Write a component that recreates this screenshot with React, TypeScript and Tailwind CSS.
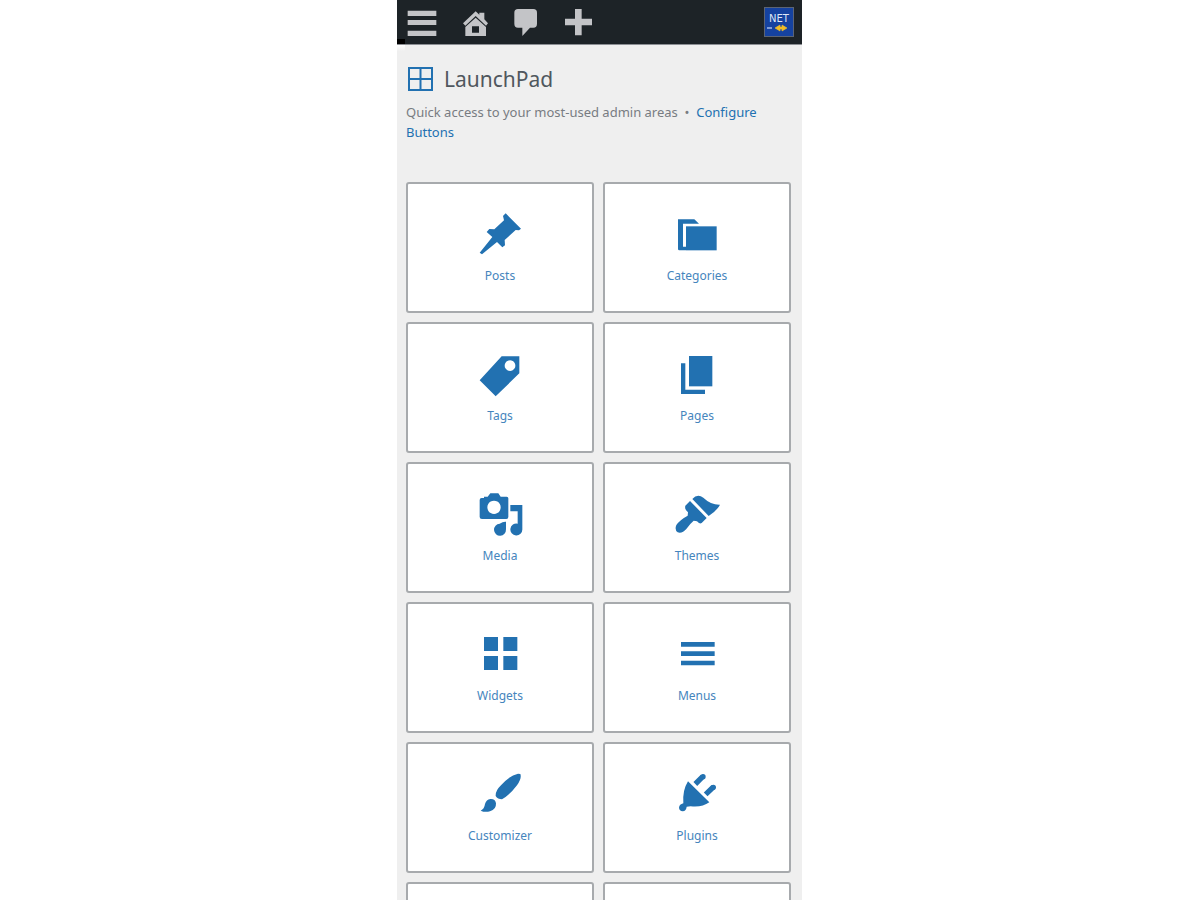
import type { ReactNode } from "react";

type Tile = { label: string; icon: ReactNode };

const tiles: Tile[] = [
  {
    label: "Posts",
    icon: <path d="M137 40 L183 86 L177 91 L167 90 L134 120 L135 136 L127 142 L111 126 L66 163 L59 158 L97 111 L80 96 L88 87 L103 88 L132 61 L129 48 Z" />,
  },
  {
    label: "Categories",
    icon: (
      <>
        <path d="M63 58 H112 L126 71 H78 V140 H87 V151 H67 Q63 151 63 147 Z" />
        <path d="M87 79 H179 V151 H87 Z" />
      </>
    ),
  },
  {
    label: "Tags",
    icon: <path fillRule="evenodd" d="M125 49 H178 V100 L107 169 L59 121 Z M150 61 a16 16 0 1 0 0.1 0 Z" />,
  },
  {
    label: "Pages",
    icon: (
      <>
        <path d="M96 48 H166 V139 H96 Z" />
        <path d="M72 70 H85 V149 H144 V162 H72 Z" />
      </>
    ),
  },
  {
    label: "Media",
    icon: (
      <>
        <path fillRule="evenodd" d="M83 50 L91 40 H115 L122 50 H140 Q145 50 145 55 V111 Q145 117 139 117 H66 Q59 117 59 111 V60 Q59 54 65 54 H72 V50 Z M102 62 a20 20 0 1 0 0.1 0 Z" />
        <path d="M151 75 H187 V148 A18 18 0 1 1 173 131 V94 H151 Z" />
        <path d="M138 125 V148 A18 18 0 1 1 119 131 Q129 124 138 125 Z" />
      </>
    ),
  },
  {
    label: "Themes",
    icon: (
      <>
        <path d="M106 57 Q121 40 139 53 Q162 75 189 74 Q181 91 155 108 Z" />
        <path d="M99 63 L149 114 L134 129 Q127 133 120 124 L110 122 Q100 130 88 147 Q76 161 62 157 Q52 149 58 135 Q68 120 92 107 L93 97 Q82 89 85 77 Z" />
      </>
    ),
  },
  {
    label: "Widgets",
    icon: <path d="M72 51 H114 V93 H72 Z M130 51 H172 V93 H130 Z M72 108 H114 V150 H72 Z M130 108 H172 V150 H130 Z" />,
  },
  {
    label: "Menus",
    icon: <path d="M72 66 H173 V80 H72 Z M72 94 H173 V108 H72 Z M72 122 H173 V136 H72 Z" />,
  },
  {
    label: "Customizer",
    icon: (
      <>
        <path d="M181 42 Q186 54 171 76 Q150 104 126 118 Q113 118 107 108 Q106 92 123 76 Q149 46 174 41 Z" />
        <path d="M91 117 Q106 116 108 130 Q109 149 90 154 Q75 158 62 152 Q73 147 75 132 Q79 119 91 117 Z" />
      </>
    ),
  },
  {
    label: "Plugins",
    icon: (
      <>
        <path d="M93 64 L157 127 Q135 143 101 139 L89 140 Q88 152 77 154 Q67 153 66 143 Q67 133 79 130 Q76 91 93 64 Z" />
        <path d="M115 72 L137 50 M146 103 L169 81" fill="none" stroke="currentColor" strokeWidth="16" />
        <circle cx="138" cy="50" r="8" />
        <circle cx="169" cy="82" r="8" />
      </>
    ),
  },
];

function AdminBar() {
  return (
    <header className="relative flex h-11 items-center justify-between bg-[#1d2327] pl-[9px] pr-2 text-[#c3c4c7]">
      <nav className="flex items-center gap-5">
        <button aria-label="Menu" className="block">
          <svg className="block h-8 w-8" viewBox="0 0 96 96" fill="currentColor">
            <path d="M5 14 H91 V30 H5 Z M5 42 H91 V57 H5 Z M5 74 H91 V90 H5 Z" />
          </svg>
        </button>
        <a href="#home" aria-label="Visit site" className="block">
          <svg className="block h-8 w-8" viewBox="204 18 96 96" fill="currentColor">
            <path d="M219 70 L257 34 L268 44 V38 H283 V58 L294 70 L288 77 L257 48 L226 77 Z" />
            <path fillRule="evenodd" d="M257 53 L288 81 V108 H226 V81 Z M246 79 V98 H267 V79 Z" />
          </svg>
        </a>
        <a href="#comments" aria-label="Comments" className="block">
          <svg className="block h-8 w-8" viewBox="360 18 96 96" fill="currentColor">
            <path d="M384 27 H430 Q441 27 441 38 V71 Q441 83 430 83 H420 L397 108 V83 H384 Q373 83 373 71 V38 Q373 27 384 27 Z" />
          </svg>
        </a>
        <a href="#new" aria-label="Add new" className="block">
          <svg className="block h-8 w-8" viewBox="516 18 96 96" fill="currentColor">
            <path d="M555 27 H575 V56 H606 V76 H575 V106 H555 V76 H525 V56 H555 Z" />
          </svg>
        </a>
      </nav>
      <a href="#profile" aria-label="Profile" className="flex h-[30px] w-[30px] flex-col items-center justify-center border border-[#5b6475] bg-[#1542a0] pt-0.5">
        <span className="font-['DejaVu_Sans',sans-serif] text-[10px] leading-[10px] text-[#dfe6f5]">NET</span>
        <svg className="block h-2 w-6" viewBox="0 0 24 8">
          <path d="M0 3 H5 V5 H0 Z" fill="#7f9bd6" />
          <path d="M8 4 L13 1 V7 Z M13 3 H16 V5 H13 Z M15 1 L20 4 L15 7 Z" fill="#f0bd27" stroke="#f0bd27" strokeWidth="0.6" />
        </svg>
      </a>
      <span className="absolute left-0 top-[39px] h-[5px] w-2 bg-black" />
      <span className="absolute left-0 top-[45px] h-1.5 w-2 bg-linear-to-b from-white to-[#efefef]" />
    </header>
  );
}

export default function App() {
  return (
    <div className="h-screen overflow-hidden bg-white pr-px font-['Noto_Sans',sans-serif]">
      <div className="mx-auto min-h-full w-full max-w-[405px] bg-[#efefef]">
        <AdminBar />
        <main className="border-t border-[#8c8f94] pl-[9px] pr-[11px] pt-5">
          <h1 className="flex items-center gap-2.5 text-[21px] leading-7 text-[#50575e]">
            <svg className="h-7 w-7" viewBox="0 0 28 28" fill="none" stroke="#2271b1" strokeWidth="2">
              <rect x="3" y="3" width="23" height="22" />
              <path d="M14.5 3 V25 M3 14 H26" />
            </svg>
            LaunchPad
          </h1>
          <p className="mt-[9px] text-[13px] leading-5 text-[#787c82]">
            Quick access to your most-used admin areas &nbsp;•&nbsp;{" "}
            <a href="#configure" className="text-[#2271b1]">
              Configure Buttons
            </a>
          </p>
          <div className="mt-10 grid grid-cols-2 gap-[9px]">
            {tiles.map((tile) => (
              <a
                key={tile.label}
                href={`#${tile.label.toLowerCase()}`}
                className="flex h-[131px] flex-col items-center rounded-[3px] border-2 border-[#a7aaad] bg-white pt-[26px] text-[#2271b1]"
              >
                <svg className="block h-12 w-12" viewBox="48 30 144 144" fill="currentColor">
                  {tile.icon}
                </svg>
                <span className="mt-2.5 text-[12px] leading-4 text-[#4585bd]">{tile.label}</span>
              </a>
            ))}
            <div className="h-[131px] rounded-[3px] border-2 border-[#a7aaad] bg-white" />
            <div className="h-[131px] rounded-[3px] border-2 border-[#a7aaad] bg-white" />
          </div>
        </main>
      </div>
    </div>
  );
}
